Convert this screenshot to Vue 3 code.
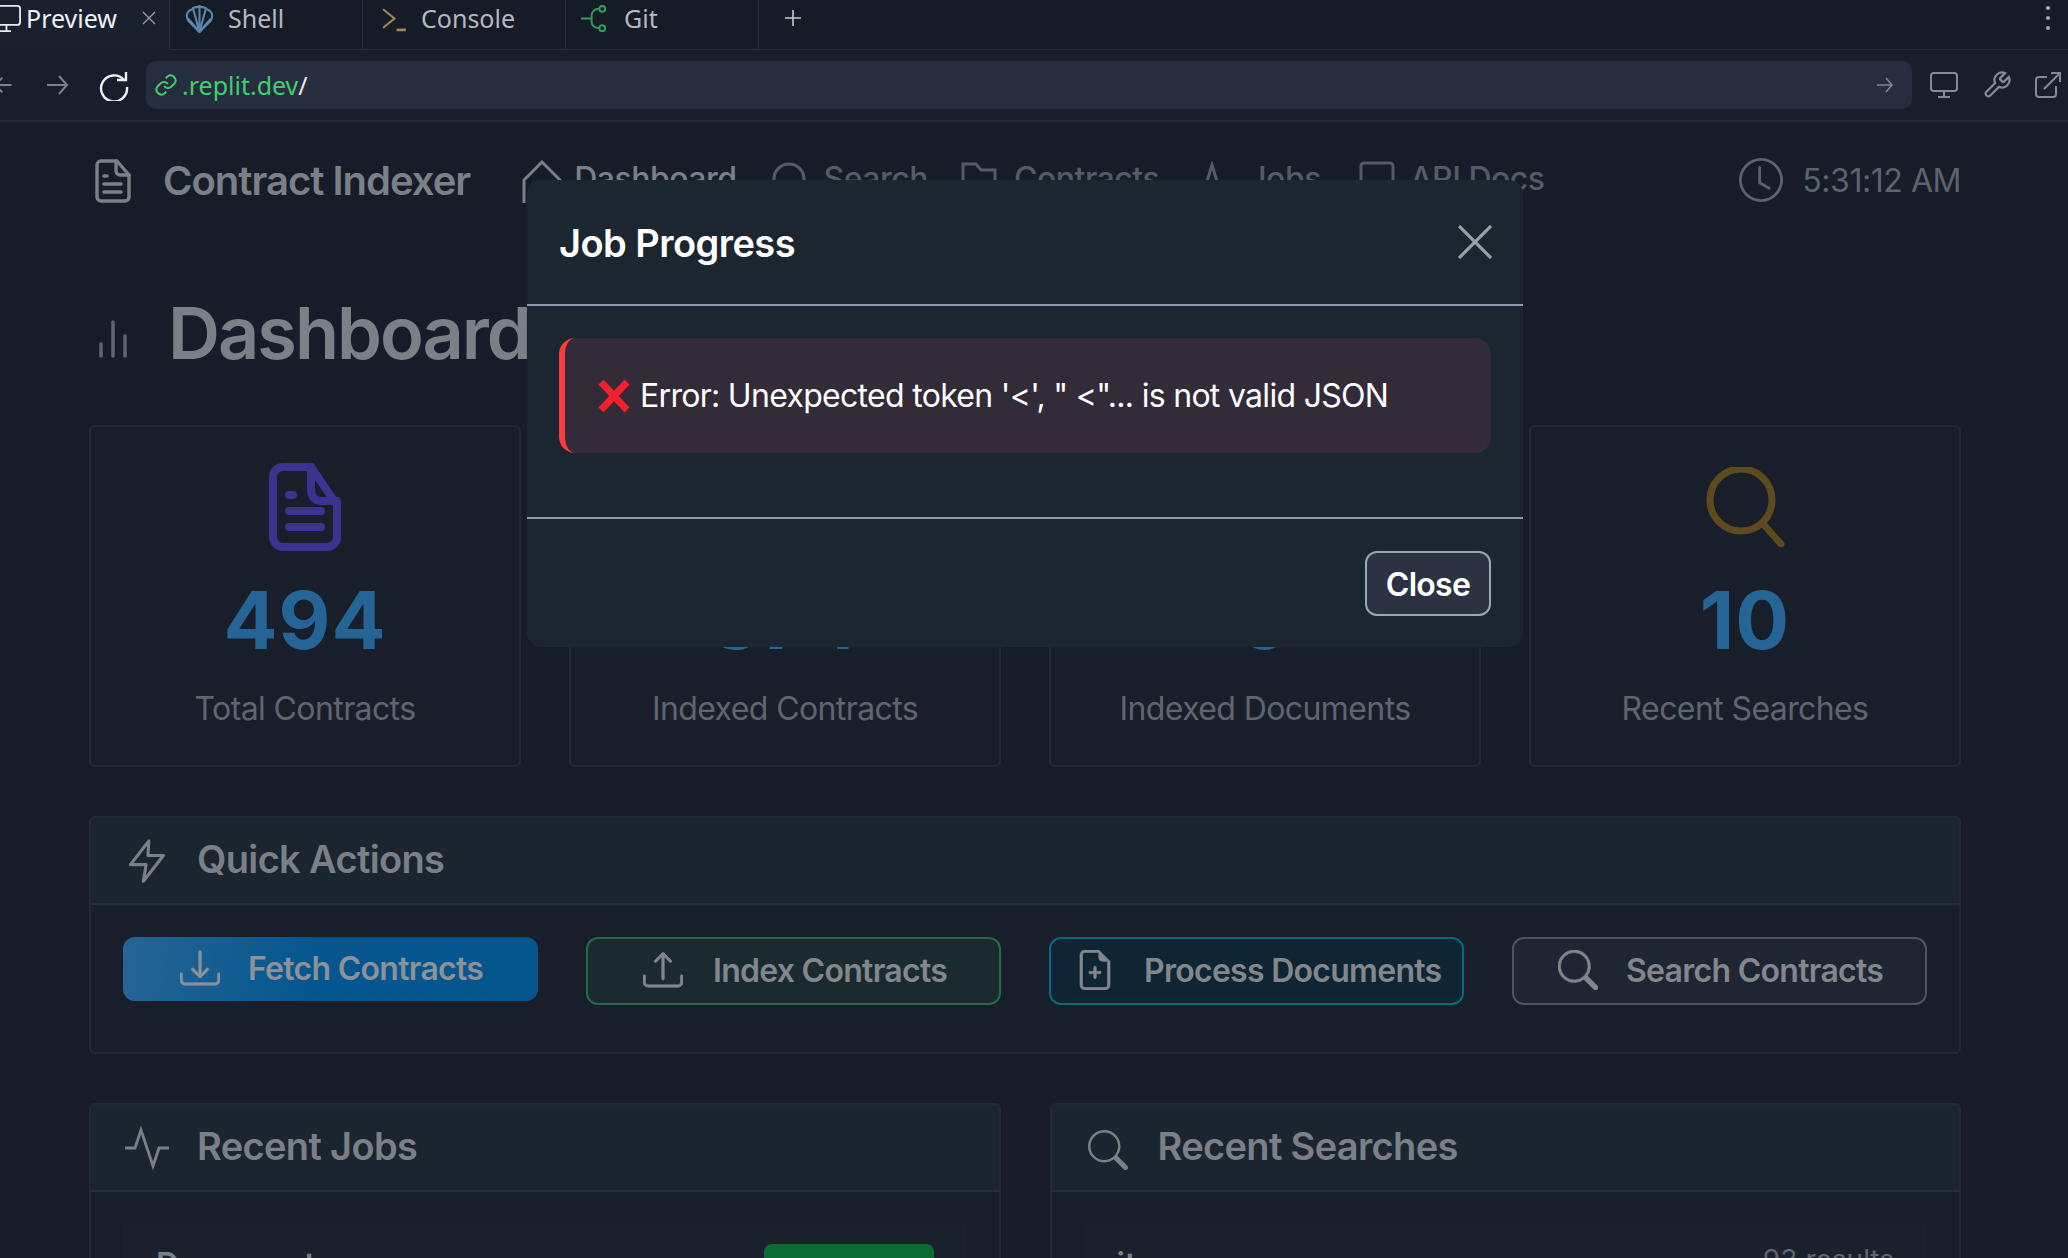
<script setup>
const stats = [
  { value: '494', label: 'Total Contracts', icon: 'file' },
  { value: '374', label: 'Indexed Contracts', icon: 'none' },
  { value: '0', label: 'Indexed Documents', icon: 'none' },
  { value: '10', label: 'Recent Searches', icon: 'search' }
]
const searchPath = 'M11.742 10.344a6.5 6.5 0 1 0-1.397 1.398h-.001c.03.04.062.078.098.115l3.85 3.85a1 1 0 0 0 1.415-1.414l-3.85-3.85a1.007 1.007 0 0 0-.115-.1zM12 6.5a5.5 5.5 0 1 1-11 0 5.5 5.5 0 0 1 11 0z'
const trayPath = 'M.5 9.9a.5.5 0 0 1 .5.5v2.5a1 1 0 0 0 1 1h12a1 1 0 0 0 1-1v-2.5a.5.5 0 0 1 1 0v2.5a2 2 0 0 1-2 2H2a2 2 0 0 1-2-2v-2.5a.5.5 0 0 1 .5-.5z'
</script>

<template>
  <div class="app">
    <header class="tabs">
      <div class="tab active">
        <svg class="ti pv" viewBox="0 0 24 32" fill="none" stroke="#e8eaee" stroke-width="2"><rect x="-8" y="2" width="30" height="21" rx="3"/><path d="M-6 30h18M7 23v7"/></svg>
        <span class="tab-t white">Preview</span>
        <svg class="tx" viewBox="0 0 14 14" fill="none" stroke="#9ca0a8" stroke-width="1.2"><path d="M1 1l12 12M13 1L1 13"/></svg>
      </div>
      <div class="tab shell">
        <svg class="ti" viewBox="0 0 28 28" fill="none" stroke="#5b87ad" stroke-width="2"><path d="M14 27 3 16C0 10 3 6 7 5c1-3 12-3 14 0 4 1 7 5 4 11z"/><path d="M14 27 8 5M14 27V1M14 27 20 5M14 27 3 14M14 27 25 14"/></svg>
        <span class="tab-t">Shell</span>
      </div>
      <div class="tab console">
        <svg class="ti" viewBox="0 0 28 28" fill="none" stroke="#9b8a55" stroke-width="2"><path d="M3 5l11 9-11 9"/><path d="M16 25h9" stroke-width="2.6"/></svg>
        <span class="tab-t">Console</span>
      </div>
      <div class="tab git">
        <svg class="ti" viewBox="0 0 30 30" fill="none" stroke="#2f9e5c" stroke-width="2"><circle cx="22" cy="5" r="3"/><circle cx="22" cy="25" r="3"/><path d="M0 15h10M19 5c-5 0-8 3-8 6v8c0 3 3 6 8 6"/></svg>
        <span class="tab-t">Git</span>
      </div>
      <div class="plus">
        <svg viewBox="0 0 20 20" fill="none" stroke="#c4c7cc" stroke-width="1.8"><path d="M10 1v18M1 10h18"/></svg>
      </div>
      <div class="dots"><i></i><i></i><i></i></div>
    </header>

    <div class="toolbar">
      <svg class="back" viewBox="0 0 24 24" fill="none" stroke="#7d8188" stroke-width="2"><path d="M-5 12h22M7 4l-8 8 8 8"/></svg>
      <svg class="fwd" viewBox="0 0 24 24" fill="none" stroke="#7d8188" stroke-width="2"><path d="M2 12h20M14 3l8 9-8 9"/></svg>
      <svg class="reload" viewBox="0 0 32 32" fill="none" stroke="#eef0f3" stroke-width="2.400"><path d="M26 11A13 13 0 1 0 29 18"/><path d="M28 3v8h-9"/></svg>
      <div class="url">
        <svg class="link" viewBox="0 0 24 24" fill="none" stroke="#3ecf6e" stroke-width="2"><path d="M10 13a5 5 0 0 0 7.500.5l3-3a5 5 0 0 0-7-7l-1.700 1.700"/><path d="M14 11a5 5 0 0 0-7.500-.5l-3 3a5 5 0 0 0 7 7l1.700-1.700"/></svg>
        <span class="green">.replit.dev</span><span class="slash">/</span>
        <svg class="go" viewBox="0 0 18 18" fill="none" stroke="#7f8590" stroke-width="1.500"><path d="M1 9h15M10 2l6 7-6 7"/></svg>
      </div>
      <svg class="tool mon" viewBox="0 0 28 26" fill="none" stroke="#868b93" stroke-width="2"><rect x="1" y="1" width="26" height="18" rx="3"/><path d="M14 19v5M8 25h12"/></svg>
      <svg class="tool wr" viewBox="0 0 24 24" fill="none" stroke="#868b93" stroke-width="1.800"><path d="M14.700 6.300a1 1 0 0 0 0 1.400l1.600 1.600a1 1 0 0 0 1.400 0l3.770-3.770a6 6 0 0 1-7.940 7.940l-6.910 6.910a2.120 2.120 0 0 1-3-3l6.910-6.910a6 6 0 0 1 7.940-7.940z"/></svg>
      <svg class="tool ex" viewBox="0 0 26 26" fill="none" stroke="#868b93" stroke-width="2"><path d="M12 5H4a3 3 0 0 0-3 3v14a3 3 0 0 0 3 3h14a3 3 0 0 0 3-3v-8"/><path d="M9 17 25 1M16 1h9v9"/></svg>
    </div>

    <main class="page">
      <nav class="nav">
        <svg class="logo" viewBox="0 0 36 44" fill="none" stroke="#7b8087" stroke-width="3.400" stroke-linejoin="round" stroke-linecap="round"><path d="M6 2h16l12 14v22a4 4 0 0 1-4 4H6a4 4 0 0 1-4-4V6a4 4 0 0 1 4-4z"/><path d="M21 2v10a4 4 0 0 0 4 4h9"/><path d="M9 17h3M9 25h17M9 33h17" stroke-width="3.600"/></svg>
        <span class="brand">Contract Indexer</span>
        <svg class="ni house" viewBox="0 0 40 46" fill="none" stroke="#7b8087" stroke-width="3"><path d="M2 44V21L20 3l18 18v23"/></svg>
        <span class="nt n1">Dashboard</span>
        <svg class="ni srch" viewBox="0 0 36 36" fill="none" stroke="#555b65" stroke-width="3"><circle cx="18" cy="18" r="15"/></svg>
        <span class="nt n2">Search</span>
        <svg class="ni fold" viewBox="0 0 36 36" fill="none" stroke="#555b65" stroke-width="3"><path d="M2 34V3h13l5 6h14v25"/></svg>
        <span class="nt n3">Contracts</span>
        <svg class="ni act" viewBox="0 0 36 36" fill="none" stroke="#555b65" stroke-width="3"><path d="M10 30 18 4l8 26"/></svg>
        <span class="nt n4">Jobs</span>
        <svg class="ni docs" viewBox="0 0 36 36" fill="none" stroke="#555b65" stroke-width="3"><path d="M2 34V5a3 3 0 0 1 3-3h26a3 3 0 0 1 3 3v29"/></svg>
        <span class="nt n5">API Docs</span>
        <div class="time">
          <svg viewBox="0 0 16 16" fill="#5d636c"><path d="M8 3.500a.500.500 0 0 0-1 0V9a.500.500 0 0 0 .252.434l3.500 2a.500.500 0 0 0 .496-.868L8 8.710V3.500z"/><path d="M8 16A8 8 0 1 0 8 0a8 8 0 0 0 0 16zm7-8A7 7 0 1 1 1 8a7 7 0 0 1 14 0z"/></svg>
          <span>5:31:12 AM</span>
        </div>
      </nav>

      <div class="heading">
        <svg viewBox="0 0 30 38" fill="none" stroke="#5f656e" stroke-width="3.500" stroke-linecap="round"><path d="M3 24v12M15 2v34M27 16v20"/></svg>
        <h1>Dashboard</h1>
      </div>

      <section class="stats">
        <div v-for="s in stats" :key="s.label" class="stat">
          <div class="stat-icon">
            <svg v-if="s.icon === 'file'" class="f" viewBox="0 0 72 88" fill="none" stroke="#3a3390" stroke-width="8" stroke-linejoin="round" stroke-linecap="round"><path d="M14 4h28l26 38v32a10 10 0 0 1-10 10H14A10 10 0 0 1 4 74V14A10 10 0 0 1 14 4z" /><path d="M42 4v24a10 10 0 0 0 10 10h16"/><path d="M20 32h4M20 48h32M20 64h32" stroke-width="8"/></svg>
            <svg v-else-if="s.icon === 'search'" class="m" viewBox="0 0 80 80" fill="none" stroke="#5d4a1e" stroke-width="7" stroke-linecap="round"><circle cx="36" cy="33" r="31"/><path d="M58 57l18 20"/></svg>
          </div>
          <div class="num">{{ s.value }}</div>
          <div class="lab">{{ s.label }}</div>
        </div>
      </section>

      <section class="card quick">
        <div class="card-h">
          <svg viewBox="0 0 24 24" fill="none" stroke="#7b8087" stroke-width="1.700" stroke-linejoin="round"><path d="M13 1 3 14h8.500L10 23l11-14h-8.500z"/></svg>
          <h2>Quick Actions</h2>
        </div>
        <div class="actions">
          <button class="act-b fetch">
            <svg viewBox="0 0 16 16" fill="#8d9198" stroke="#8d9198" stroke-width=".25"><path :d="trayPath"/><path d="M7.646 11.854a.500.500 0 0 0 .708 0l3-3a.500.500 0 0 0-.708-.708L8.500 10.293V1.500a.500.500 0 0 0-1 0v8.793L5.354 8.146a.500.500 0 1 0-.708.708l3 3z"/></svg>
            <span>Fetch Contracts</span>
          </button>
          <button class="act-b index">
            <svg viewBox="0 0 16 16" fill="#83878d" stroke="#83878d" stroke-width=".25"><path :d="trayPath"/><path d="M7.646 1.146a.500.500 0 0 1 .708 0l3 3a.500.500 0 0 1-.708.708L8.500 2.707V11.500a.500.500 0 0 1-1 0V2.707L5.354 4.854a.500.500 0 1 1-.708-.708l3-3z"/></svg>
            <span>Index Contracts</span>
          </button>
          <button class="act-b process">
            <svg viewBox="2 0 12 16" fill="#83878d" stroke="#83878d" stroke-width=".25"><path d="M8 6.500a.500.500 0 0 1 .500.500v1.500H10a.500.500 0 0 1 0 1H8.500V11a.500.500 0 0 1-1 0V9.500H6a.500.500 0 0 1 0-1h1.500V7a.500.500 0 0 1 .500-.500z"/><path d="M14 4.500V14a2 2 0 0 1-2 2H4a2 2 0 0 1-2-2V2a2 2 0 0 1 2-2h5.500L14 4.500zm-3 0A1.500 1.500 0 0 1 9.500 3V1H4a1 1 0 0 0-1 1v12a1 1 0 0 0 1 1h8a1 1 0 0 0 1-1V4.500h-2z"/></svg>
            <span>Process Documents</span>
          </button>
          <button class="act-b find">
            <svg viewBox="0 0 16 16" fill="#83878d" stroke="#83878d" stroke-width=".25"><path :d="searchPath"/></svg>
            <span>Search Contracts</span>
          </button>
        </div>
      </section>

      <section class="two">
        <div class="card low">
          <div class="card-h">
            <svg viewBox="0 0 44 40" fill="none" stroke="#7b8087" stroke-width="2.800"><path d="M0 20h10l6-18 12 36 6-18h10"/></svg>
            <h2>Recent Jobs</h2>
          </div>
          <div class="list">
            <div class="row"><strong>Document</strong><b class="badge">Completed</b></div>
          </div>
        </div>
        <div class="card low">
          <div class="card-h">
            <svg class="sm" viewBox="0 0 16 16" fill="#7b8087"><path :d="searchPath"/></svg>
            <h2>Recent Searches</h2>
          </div>
          <div class="list">
            <div class="row"><strong class="q">it</strong><em>93 results</em></div>
          </div>
        </div>
      </section>
    </main>

    <div class="modal" role="dialog">
      <div class="m-head">
        <h3>Job Progress</h3>
        <svg viewBox="0 0 34 34" fill="none" stroke="#9a9fa4" stroke-width="3.200"><path d="M1 1l32 32M33 1 1 33"/></svg>
      </div>
      <div class="m-body">
        <div class="alert">
          <svg viewBox="0 0 32 32" fill="none" stroke="#f0202c" stroke-width="7"><path d="M3 2l26 28M29 2 3 30"/></svg>
          <span>Error: Unexpected token '&lt;', " &lt;"... is not valid JSON</span>
        </div>
      </div>
      <div class="m-foot"><button>Close</button></div>
    </div>
  </div>
</template>

<style>
html, body { margin: 0; background: #161d29; }
</style>

<style scoped>
.app { position: relative; width: 2068px; height: 1258px; overflow: hidden; background: #161d29; font-family: Inter, "Liberation Sans", sans-serif; }
h1, h2, h3 { margin: 0; }
button { font-family: inherit; cursor: pointer; }

.tabs { display: flex; height: 49px; background: #151c28; border-bottom: 1px solid #262d39; position: relative; box-sizing: content-box; font-family: "Noto Sans", sans-serif; font-size: 25px; color: #b5b8bd; }
.tab { display: flex; align-items: center; height: 49px; border-right: 1px solid #262d39; box-sizing: border-box; padding-bottom: 13px; }
.tab.active { width: 170px; background: #1a212e; margin-bottom: -1px; height: 50px; padding-left: 0; padding-bottom: 14px; }
.tab.shell { width: 193px; padding-left: 15px; }
.tab.console { width: 203px; padding-left: 17px; }
.tab.git { width: 193px; padding-left: 15px; }
.ti { width: 29px; height: 29px; flex: none; margin-right: 14px; }
.console .ti { margin-right: 12px; }
.ti.pv { width: 22px; height: 29px; margin-right: 4px; }
.white { color: #f1f2f4; }
.tab-t { white-space: nowrap; }
.tx { width: 14px; height: 14px; margin-left: 25px; }
.plus { margin-left: 25px; padding-top: 9px; }
.plus svg { display: block; width: 18px; height: 18px; }
.dots { position: absolute; right: 18px; top: 6px; display: flex; flex-direction: column; gap: 6px; }
.dots i { width: 4px; height: 4px; background: #a5a9af; border-radius: 50%; }

.toolbar { display: flex; align-items: center; height: 70px; box-sizing: border-box; border-bottom: 2px solid #252c38; background: #181f2c; padding-bottom: 2px; padding-top: 2px; }
.toolbar { height: 72px; }
.back { width: 22px; height: 24px; margin-left: -4px; flex: none; }
.fwd { width: 24px; height: 24px; margin-left: 27px; flex: none; }
.reload { width: 32px; height: 32px; margin-left: 29px; flex: none; }
.url { display: flex; align-items: center; flex: none; width: 1766px; height: 48px; margin-left: 16px; margin-right: 18px; background: #262d3e; border-radius: 10px; font-family: "Noto Sans", sans-serif; font-size: 25px; padding-left: 8px; box-sizing: border-box; }
.link { width: 24px; height: 24px; margin-right: 4px; flex: none; }
.green { color: #3ecf6e; }
.slash { color: #e8eaee; }
.go { width: 18px; height: 18px; margin-left: auto; margin-right: 18px; }
.tool { flex: none; }
.mon { width: 28px; height: 26px; }
.wr { width: 30px; height: 30px; margin-left: 24px; }
.ex { width: 26px; height: 26px; margin-left: 23px; }

.page { padding: 0 107px 0 89px; }
.nav { position: relative; display: flex; align-items: center; height: 118px; font-size: 32px; }
.logo { width: 36px; height: 44px; margin-left: 6px; flex: none; }
.brand { margin-left: 32px; margin-bottom: 2px; font-size: 40px; font-weight: 600; color: #7b8087; letter-spacing: -1px; white-space: nowrap; }
.ni { flex: none; margin-bottom: 4px; }
.nt { color: #7b8087; font-weight: 500; white-space: nowrap; margin-bottom: 5px; letter-spacing: -0.5px; }
.nt:not(.n1) { color: #555b65; }
.house { width: 40px; height: 46px; margin-left: 52px; margin-top: 2px; margin-bottom: 0; }
.n1 { margin-left: 12px; }
.srch { width: 36px; height: 36px; margin-left: 34px; }
.n2 { margin-left: 17px; }
.fold { width: 36px; height: 36px; margin-left: 33px; }
.n3 { margin-left: 17px; }
.act { width: 36px; height: 36px; margin-left: 35px; }
.n4 { margin-left: 18px; }
.docs { width: 36px; height: 36px; margin-left: 38px; }
.n5 { margin-left: 15px; }
.time { margin-left: auto; display: flex; align-items: center; gap: 19px; color: #5d636c; font-size: 32px; letter-spacing: -0.45px; margin-bottom: 2px; }
.time svg { width: 44px; height: 44px; }

.heading { display: flex; align-items: center; height: 96px; margin-top: 45px; padding-left: 9px; }
.heading svg { width: 30px; height: 38px; flex: none; margin-top: 12px; }
.heading h1 { margin-left: 40px; font-size: 72px; font-weight: 600; color: #7b8087; letter-spacing: -2px; line-height: 1; }

.stats { display: grid; grid-template-columns: repeat(4, 1fr); gap: 48px; margin-top: 44px; }
.stat { height: 342px; box-sizing: border-box; background: #181f2b; border: 2px solid #232a36; border-radius: 6px; text-align: center; padding-top: 35px; }
.stat-icon { height: 90px; display: flex; justify-content: center; align-items: center; }
.stat-icon .f { width: 72px; height: 88px; }
.stat-icon .m { width: 80px; height: 80px; }
.num { margin-top: 28px; font-size: 80px; font-weight: 700; line-height: 80px; color: #256595; letter-spacing: 1px; }
.lab { margin-top: 29px; font-size: 32px; color: #5f656e; line-height: 40px; letter-spacing: -0.6px; }

.card { background: #181f2b; border: 2px solid #232a36; border-radius: 6px; box-sizing: border-box; overflow: hidden; }
.card-h { display: flex; align-items: center; height: 87px; background: #1a2530; border-bottom: 2px solid #252e3a; padding-left: 34px; box-sizing: border-box; }
.card-h svg { width: 44px; height: 44px; flex: none; margin-right: 28px; }
.card-h svg.sm { width: 40px; height: 40px; margin: 4px 30px 0 2px; }
.card-h h2 { font-size: 38px; font-weight: 600; color: #7b8087; letter-spacing: -0.65px; white-space: nowrap; margin-bottom: 4px; }

.quick { height: 238px; margin-top: 49px; }
.actions { display: grid; grid-template-columns: repeat(4, 415px); column-gap: 48px; padding: 32px 32px 0; height: 100px; align-items: start; }
.act-b { display: flex; align-items: center; justify-content: flex-start; height: 68px; box-sizing: border-box; background: #1e2533; border: 2px solid #4f5560; border-radius: 12px; font-size: 32px; font-weight: 600; color: #83878d; letter-spacing: -0.72px; white-space: nowrap; padding: 0 0 2px 54px; }
.act-b svg { width: 40px; height: 40px; flex: none; margin-right: 28px; }
.fetch { height: 64px; border: 0; padding-left: 57px; padding-bottom: 2px; background: linear-gradient(100deg, #266594 0%, #05568f 45%, #05568f 100%); color: #8d9198; }
.index { border-color: #246b48; background: #1a2a2f; padding-left: 55px; }
.index svg { margin-right: 30px; }
.process { border-color: #076a80; background: #0f2533; padding-left: 26px; }
.process svg { width: 36px; margin-right: 31px; }
.find { padding-left: 44px; }

.two { display: grid; grid-template-columns: repeat(2, 1fr); gap: 49px; margin-top: 49px; }
.low { height: 200px; }
.list { padding: 32px 32px 0; }
.row { display: flex; justify-content: space-between; height: 120px; background: #1a212d; padding: 20px 33px 0; box-sizing: border-box; color: #7b8087; font-size: 32px; }
.row strong { font-weight: 600; line-height: 60px; margin-top: -9px; }
.row em { font-style: normal; font-size: 28px; color: #5f656e; line-height: 32px; }
.badge { width: 170px; height: 60px; background: #0a6b34; border-radius: 8px; color: transparent; font-weight: 500; display: block; text-align: center; line-height: 60px; }

.modal { position: absolute; left: 527px; top: 180px; width: 996px; height: 467px; background: #1b2630; border-radius: 14px; }
.m-head { display: flex; align-items: center; justify-content: space-between; height: 126px; padding: 0 31px 0 32px; border-bottom: 2px solid #8d9bb0; box-sizing: border-box; }
.m-head h3 { font-size: 38px; font-weight: 600; color: #fff; letter-spacing: -0.55px; margin-top: 2px; }
.m-head svg { width: 34px; height: 34px; }
.m-body { height: 213px; padding: 32px 32px 0; box-sizing: border-box; border-bottom: 2px solid #8d9bb0; }
.alert { display: flex; align-items: center; height: 115px; box-sizing: border-box; background: #342b38; border-left: 6px solid #ff3b3b; border-radius: 16px; padding-left: 33px; color: #fff; font-size: 32px; letter-spacing: -0.7px; white-space: nowrap; }
.alert svg { width: 32px; height: 32px; flex: none; margin-right: 10px; }
.m-foot { display: flex; justify-content: flex-end; padding: 32px 32px 0; }
.m-foot button { width: 126px; height: 65px; background: #2b3342; border: 2px solid #9aa6b8; border-radius: 12px; color: #fff; font-size: 32px; font-weight: 600; letter-spacing: -0.7px; padding: 2px 0 0; }
</style>
